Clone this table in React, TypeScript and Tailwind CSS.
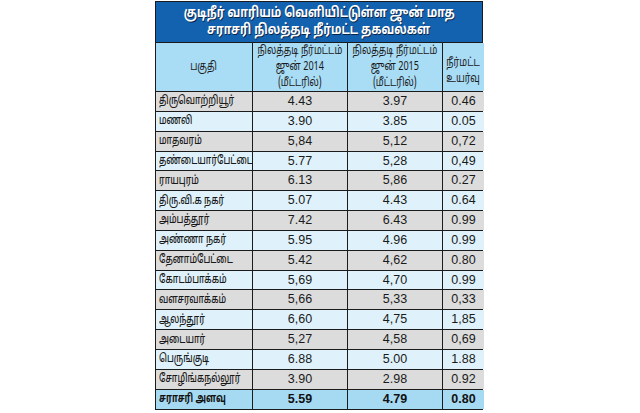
const TAMIL = "font-['Noto_Sans_Tamil','Lohit_Tamil','Noto_Sans','Liberation_Sans',sans-serif]";
const NUM = "font-['Liberation_Sans_Narrow','Liberation_Sans',sans-serif]";

type Row = { area: string; y2014: string; y2015: string; rise: string };

const ROWS: Row[] = [
  { area: 'திருவொற்றியூர்', y2014: '4.43', y2015: '3.97', rise: '0.46' },
  { area: 'மணலி', y2014: '3.90', y2015: '3.85', rise: '0.05' },
  { area: 'மாதவரம்', y2014: '5,84', y2015: '5,12', rise: '0,72' },
  { area: 'தண்டையார்பேட்டை', y2014: '5.77', y2015: '5,28', rise: '0,49' },
  { area: 'ராயபுரம்', y2014: '6.13', y2015: '5,86', rise: '0.27' },
  { area: 'திரு.வி.க நகர்', y2014: '5.07', y2015: '4.43', rise: '0.64' },
  { area: 'அம்பத்தூர்', y2014: '7.42', y2015: '6.43', rise: '0.99' },
  { area: 'அண்ணா நகர்', y2014: '5.95', y2015: '4.96', rise: '0.99' },
  { area: 'தேனாம்பேட்டை', y2014: '5.42', y2015: '4,62', rise: '0.80' },
  { area: 'கோடம்பாக்கம்', y2014: '5,69', y2015: '4,70', rise: '0.99' },
  { area: 'வளசரவாக்கம்', y2014: '5,66', y2015: '5,33', rise: '0,33' },
  { area: 'ஆலந்தூர்', y2014: '6,60', y2015: '4,75', rise: '1,85' },
  { area: 'அடையார்', y2014: '5,27', y2015: '4,58', rise: '0,69' },
  { area: 'பெருங்குடி', y2014: '6.88', y2015: '5.00', rise: '1.88' },
  { area: 'சோழிங்கநல்லூர்', y2014: '3.90', y2015: '2.98', rise: '0.92' },
];

// the print uses a condensed Tamil face; squeeze the installed one to match
function Narrow({ children, left }: { children: React.ReactNode; left?: boolean }) {
  return (
    <span className={`inline-block whitespace-nowrap ${left ? 'origin-left scale-x-[0.72]' : 'origin-center scale-x-[0.76]'}`}>
      {children}
    </span>
  );
}

function DataRow({ row, index }: { row: Row; index: number }) {
  const bg = index % 2 === 0 ? 'bg-[#dcdcdc]' : 'bg-[#dff2fb]';
  const num = `${bg} flex items-center justify-center text-[12.5px] text-[#1a1a1a] ${NUM}`;
  return (
    <>
      <div className={`${bg} flex items-center overflow-hidden pl-[3px] text-[12px] font-medium text-[#1a1a1a] ${TAMIL}`}>
        <Narrow left>{row.area}</Narrow>
      </div>
      <div className={num}>{row.y2014}</div>
      <div className={num}>{row.y2015}</div>
      <div className={num}>{row.rise}</div>
    </>
  );
}

export default function App() {
  const headCell = `bg-[#a9dcf5] flex flex-col items-center justify-center text-center text-[12px] leading-[16px] text-[#1a1a1a] ${TAMIL}`;
  const avg = `bg-[#a6d9f2] flex items-center justify-center text-[12.5px] font-bold text-[#111] ${NUM}`;

  return (
    <div className="h-[413px] w-[640px] bg-white pt-px">
      <div className="ml-[155px] w-[328px] bg-[#1b1b1b] p-px">
        {/* Title */}
        <div
          className={`flex h-[40px] flex-col items-center justify-center bg-[#1262b0] text-[14px] font-bold leading-[17px] text-white [text-shadow:1px_1px_0_#0a2447] ${TAMIL}`}
        >
          <span className="inline-block whitespace-nowrap scale-x-[0.8]">
            குடிநீர் வாரியம் வெளியிட்டுள்ள ஜுன் மாத
          </span>
          <span className="inline-block whitespace-nowrap scale-x-[0.8]">
            சராசரி நிலத்தடி நீர்மட்ட தகவல்கள்
          </span>
        </div>

        <div className="mt-px grid grid-cols-[96px_94px_94px_41px] grid-rows-[48px] auto-rows-[18.85px] gap-px">
          {/* Header */}
          <div className={headCell}>
            <Narrow>பகுதி</Narrow>
          </div>
          <div className={headCell}>
            <Narrow>நிலத்தடி நீர்மட்டம்</Narrow>
            <Narrow>ஜுன் 2014</Narrow>
            <Narrow>(மீட்டரில்)</Narrow>
          </div>
          <div className={headCell}>
            <Narrow>நிலத்தடி நீர்மட்டம்</Narrow>
            <Narrow>ஜுன் 2015</Narrow>
            <Narrow>(மீட்டரில்)</Narrow>
          </div>
          <div className={`${headCell} pt-2`}>
            <Narrow>நீர்மட்ட</Narrow>
            <Narrow>உயர்வு</Narrow>
          </div>

          {ROWS.map((r, i) => (
            <DataRow key={r.area} row={r} index={i} />
          ))}

          {/* Average */}
          <div className={`bg-[#a6d9f2] flex items-center overflow-hidden pl-[3px] text-[12px] font-bold text-[#111] ${TAMIL}`}>
            <Narrow left>சராசரி அளவு</Narrow>
          </div>
          <div className={avg}>5.59</div>
          <div className={avg}>4.79</div>
          <div className={avg}>0.80</div>
        </div>
      </div>
    </div>
  );
}
